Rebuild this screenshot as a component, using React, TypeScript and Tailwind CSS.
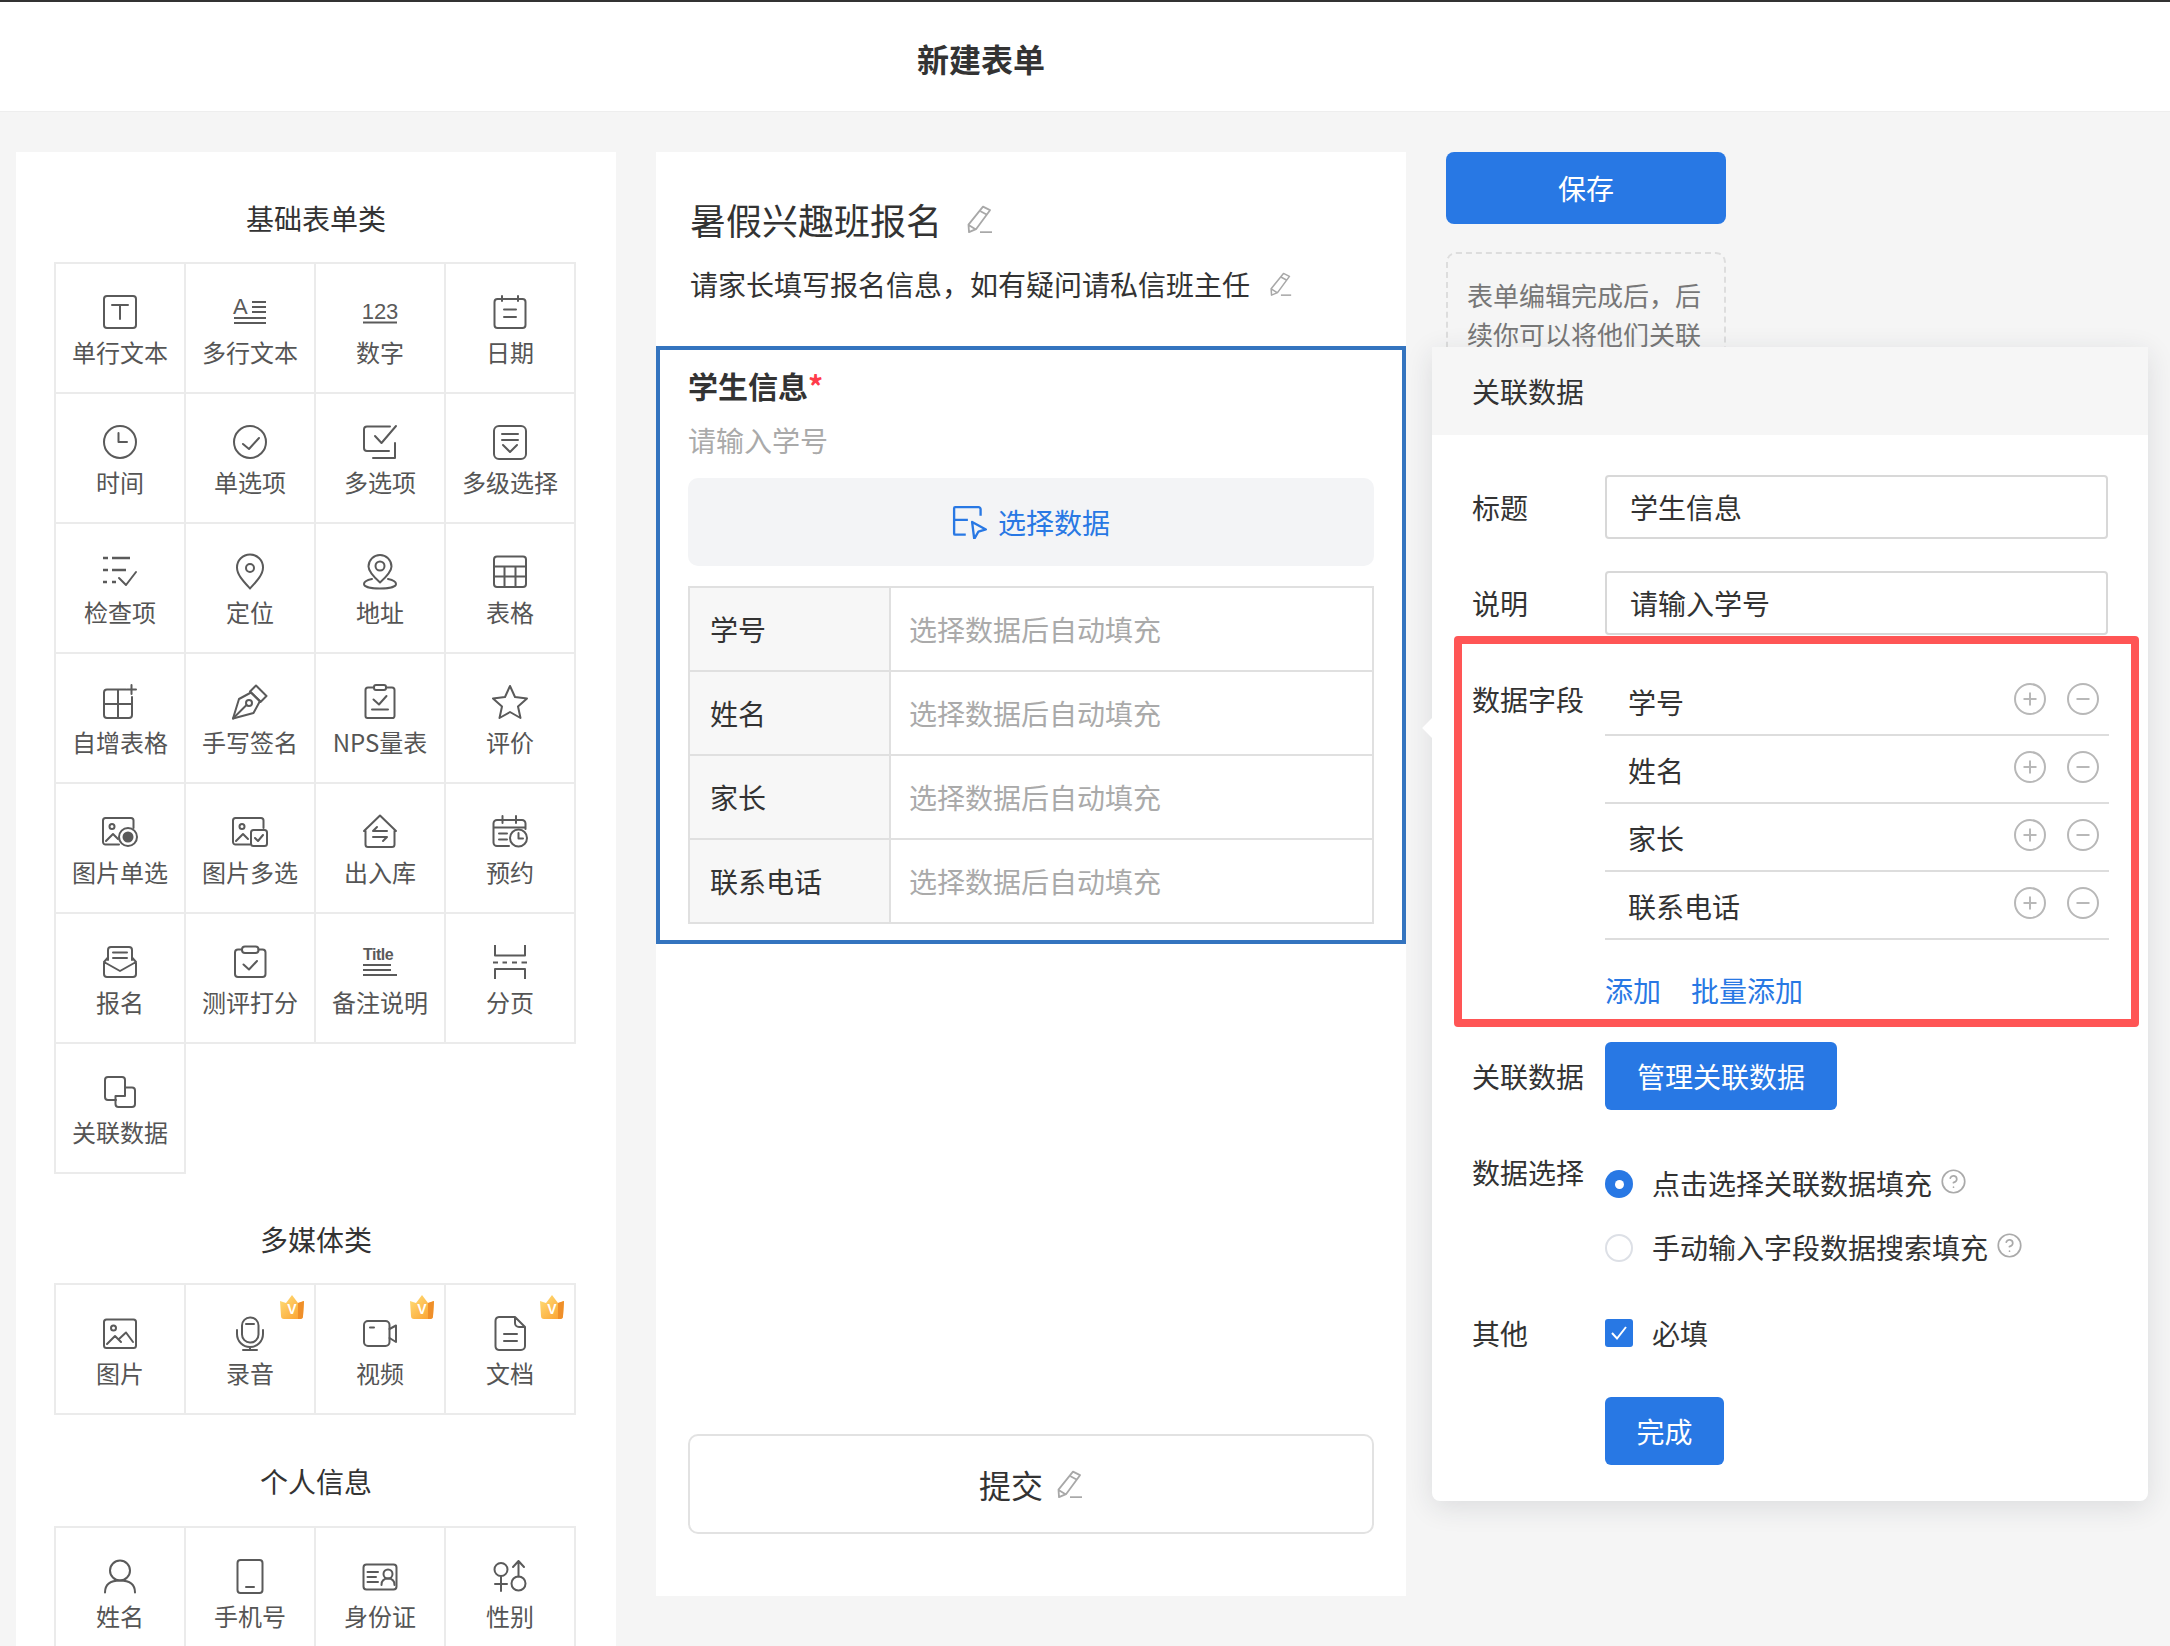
import type { ReactNode } from "react";
import { CircleHelp } from "lucide-react";

const S = ({ children }: { children: ReactNode }) => (
    <svg width="36" height="36" viewBox="0 0 36 36" fill="none" stroke="#5a5a5a" strokeWidth="2" strokeLinecap="round" strokeLinejoin="round" overflow="visible">
        {children}
    </svg>
);

const icons: Record<string, ReactNode> = {
    text: <S><rect x="2" y="2" width="32" height="32" rx="3" /><path d="M10 11H26M18 11V25" /></S>,
    lines: (
        <S>
            <text x="1" y="20" fontSize="22" fill="#5a5a5a" stroke="none" fontFamily="Liberation Sans">A</text>
            <path d="M20 8H34M20 13H34M20 18H34M2 24H34M2 29H34" strokeLinecap="butt" />
        </S>
    ),
    num: (
        <S>
            <text x="18" y="25" fontSize="22" textAnchor="middle" fill="#5a5a5a" stroke="none" fontFamily="Liberation Sans">123</text>
            <path d="M1 28.5H35" strokeLinecap="butt" />
        </S>
    ),
    date: <S><rect x="2.5" y="5" width="31" height="29" rx="3" /><path d="M10 2V7M26 2V7M12 15.5H24M12 23H24" /></S>,
    clock: <S><circle cx="18" cy="18" r="16" /><path d="M16.5 9V18H25" /></S>,
    radio: <S><circle cx="18" cy="18" r="16" /><path d="M11 20L17 25L27 14" /></S>,
    multi: <S><path d="M28 2.5H5a3 3 0 0 0-3 3V24a3 3 0 0 0 3 3H27M13 12L19.5 19L34 2M33 19V34H11" /></S>,
    cascade: <S><rect x="2" y="2" width="32" height="33" rx="5" /><path d="M10 10H26M10 16H26M11 21L18 28L25 21" /></S>,
    check: (
        <S>
            <path d="M1 4H6M10 4H28M1 16H6M10 16H24M1 28H5M10 28H14" strokeWidth="2.6" strokeLinecap="butt" />
            <path d="M17 24L24 31L34 18" />
        </S>
    ),
    pin: <S><path d="M18 34.5C12 28 5 21 5 13.5A13 13 0 0 1 31 13.5C31 21 24 28 18 34.5Z" /><circle cx="18" cy="14" r="4" /></S>,
    addr: (
        <S>
            <path d="M18 28.5C13 24 6.5 18 6.5 12.5A11.5 11.5 0 0 1 29.5 12.5C29.5 18 23 24 18 28.5Z" />
            <circle cx="18" cy="12" r="4.5" />
            <path d="M10 25C5 26 2 27.5 2 30C2 33 10 34.5 18 34.5S34 33 34 30C34 27.5 31 26 26 25" />
        </S>
    ),
    table: <S><rect x="2" y="2.5" width="32" height="30.5" rx="3" /><path d="M2 12.5H34M2 22.5H34M12.5 12.5V33M23.5 12.5V33" /></S>,
    addTable: (
        <S>
            <path d="M24 5.5H5a3 3 0 0 0-3 3V31a3 3 0 0 0 3 3H27a3 3 0 0 0 3-3V13M16 5.5V34M2 20H30M29.5 1V10M25 5.5H34" />
        </S>
    ),
    sign: (
        <S>
            <path d="M1 34.5L7 15L19 8.5L28 17L21.5 29Z" />
            <path d="M18 7.5L24 1.5L34.5 12L28.5 18Z" />
            <circle cx="17" cy="19" r="3" />
            <path d="M1 34.5L14.5 21" />
        </S>
    ),
    nps: (
        <S>
            <path d="M12 3.5H6a2.5 2.5 0 0 0-2.5 2.5V32a2 2 0 0 0 2 2H30a2 2 0 0 0 2.500-2V6A2.500 2.500 0 0 0 30 3.500H24" />
            <rect x="12" y="1" width="12" height="5" rx="2" />
            <path d="M11.500 15.500L17 20.500L24.500 12M10 25.500H26" />
        </S>
    ),
    star: <S><path d="M18 2L23 13L35 14.500L26 22.500L28.500 34L18 28L7.500 34L10 22.500L1 14.500L13 13Z" /></S>,
    imgRadio: (
        <S>
            <path d="M31.500 14V6.500A2.500 2.500 0 0 0 29 4H3.500A2.500 2.500 0 0 0 1 6.500V28A2.500 2.500 0 0 0 3.500 30.500H17" />
            <circle cx="10" cy="12.500" r="2.500" />
            <path d="M4 27L11 20L16 25" />
            <circle cx="26" cy="23" r="9" />
            <circle cx="26" cy="23" r="5.500" fill="#5a5a5a" stroke="none" />
        </S>
    ),
    imgMulti: (
        <S>
            <path d="M31.500 14V6.500A2.500 2.500 0 0 0 29 4H3.500A2.500 2.500 0 0 0 1 6.500V28A2.500 2.500 0 0 0 3.500 30.500H18" />
            <circle cx="10" cy="12.500" r="2.500" />
            <path d="M4 27L11 20L16 25" />
            <rect x="19" y="16" width="16" height="16" rx="2.500" />
            <path d="M23 24L26 27L31 21" />
        </S>
    ),
    stock: (
        <S>
            <path d="M18 1.500L2 17H3.500V30.500A2.500 2.500 0 0 0 6 33H30A2.500 2.500 0 0 0 32.500 30.500V17H34Z" />
            <path d="M25 17H11L15 13M11 23H25L21 27" />
        </S>
    ),
    book: (
        <S>
            <path d="M17 32H5A3.500 3.500 0 0 1 1.500 28.500V9.500A3.500 3.500 0 0 1 5 6H30A3.500 3.500 0 0 1 33.500 9.500V15M1.500 13.500H33.500M10.500 2V9M24 2V9M7 19.500H15M7 25.500H15" />
            <circle cx="26.500" cy="24" r="8.500" />
            <path d="M26.500 19V24.500H31" />
        </S>
    ),
    signup: (
        <S>
            <path d="M6 16V6A3 3 0 0 1 9 3H27A3 3 0 0 1 30 6V16M11 8.500H25M11 14H25" />
            <path d="M6 13.500L2 18V30A3 3 0 0 0 5 33H31A3 3 0 0 0 34 30V18L30 13.500M2 18L18 27L34 18" />
        </S>
    ),
    score: (
        <S>
            <path d="M10 5.500H6A3 3 0 0 0 3 8.500V30A3 3 0 0 0 6 33H30.500A3 3 0 0 0 33.500 30V8.500A3 3 0 0 0 30.500 5.500H26.500" />
            <rect x="10" y="2.500" width="16.500" height="6.500" rx="3" />
            <path d="M11.500 20.500L17 25.500L25 17" />
        </S>
    ),
    note: (
        <S>
            <text x="1" y="16" fontSize="16" fill="#5a5a5a" stroke="none" fontFamily="Liberation Sans" fontWeight="700" letterSpacing="-0.5">Title</text>
            <path d="M1 21H29M1 26H29M1 31H35" strokeLinecap="butt" />
        </S>
    ),
    page: <S><path d="M3 1V11.500H33V1M1 18.500H6M10.500 18.500H15M20 18.500H25M29.500 18.500H35M3 35V25H33V35" strokeLinecap="butt" /></S>,
    link: (
        <S>
            <path d="M14 26H6A3 3 0 0 1 3 23V6A3 3 0 0 1 6 3H20A3 3 0 0 1 23 6V13" />
            <path d="M23 22V13.500H30A3 3 0 0 1 33 16.500V30A3 3 0 0 1 30 33H16.500A3 3 0 0 1 13.500 30V22H23Z" />
        </S>
    ),
    image: (
        <S>
            <rect x="2" y="4.500" width="32" height="28.500" rx="2.500" />
            <circle cx="11.500" cy="13" r="2.500" />
            <path d="M5 29L13 21L19 27M17 24L24 17.500L31 27" />
        </S>
    ),
    mic: (
        <S>
            <rect x="10" y="2.500" width="16.500" height="25" rx="8" />
            <path d="M14 9H22M5 15V19A13 13 0 0 0 31 19V15M18 32V35M11 35H25" />
        </S>
    ),
    video: (
        <S>
            <rect x="2" y="6" width="25.500" height="25" rx="4" />
            <path d="M27.500 14L34 10.500V27L27.500 23M8 12.500H12" />
        </S>
    ),
    doc: (
        <S>
            <path d="M23 2H7A4 4 0 0 0 3.500 6V31A4 4 0 0 0 7 35H29A4 4 0 0 0 33 31V12ZM23 2V8A4 4 0 0 0 27 12H33M12 19H25M12 26H25" />
        </S>
    ),
    person: <S><circle cx="18" cy="12.500" r="10" /><path d="M3 34.500C3 26 9 22.500 18 22.500S33 26 33 34.500" /></S>,
    phone: <S><rect x="5.500" y="2" width="25" height="33" rx="3" /><path d="M14 29H22" /></S>,
    idcard: (
        <S>
            <rect x="1.500" y="6.500" width="33" height="25" rx="3" />
            <path d="M5.500 14H16M5.500 19H14M5.500 24H16" />
            <circle cx="26" cy="16" r="4.500" />
            <path d="M19.500 27C19.500 22.500 22 20.500 26 20.500S32.500 22.500 32.500 27" />
        </S>
    ),
    gender: (
        <S>
            <circle cx="9" cy="11.500" r="6.500" />
            <path d="M9 18V33M3 26H15" />
            <circle cx="26.500" cy="25.500" r="7" />
            <path d="M26.500 18.500V3M21 9L26.500 3L32 9" />
        </S>
    ),
};

const basic = [
    ["text", "单行文本"], ["lines", "多行文本"], ["num", "数字"], ["date", "日期"],
    ["clock", "时间"], ["radio", "单选项"], ["multi", "多选项"], ["cascade", "多级选择"],
    ["check", "检查项"], ["pin", "定位"], ["addr", "地址"], ["table", "表格"],
    ["addTable", "自增表格"], ["sign", "手写签名"], ["nps", "NPS量表"], ["star", "评价"],
    ["imgRadio", "图片单选"], ["imgMulti", "图片多选"], ["stock", "出入库"], ["book", "预约"],
    ["signup", "报名"], ["score", "测评打分"], ["note", "备注说明"], ["page", "分页"],
    ["link", "关联数据"],
];
const media = [["image", "图片"], ["mic", "录音", "v"], ["video", "视频", "v"], ["doc", "文档", "v"]];
const personal = [["person", "姓名"], ["phone", "手机号"], ["idcard", "身份证"], ["gender", "性别"]];

const fields = ["学号", "姓名", "家长", "联系电话"];

function Crown() {
    return (
        <svg className="absolute top-[10px] right-[10px]" width="24" height="24" viewBox="0 0 24 24">
            <defs>
                <linearGradient id="crown" x1="0" y1="0" x2="1" y2="1">
                    <stop offset="0" stopColor="#ffe07a" />
                    <stop offset="1" stopColor="#fb9d2c" />
                </linearGradient>
            </defs>
            <path d="M0 6L6 8L12 0L18 8L24 6L23 21Q23 24 20 24H4Q1 24 1 21Z" fill="url(#crown)" />
            <path d="M18 8L24 6L23 21Q23 24 20 24L18 24Z" fill="#ef8f2a" />
            <text x="12" y="19" fontSize="14" fontWeight="700" textAnchor="middle" fill="#fff" fontFamily="Liberation Sans">V</text>
        </svg>
    );
}

function Palette({ items }: { items: string[][] }) {
    return (
        <div className="w-[522px] mr-[2px] pt-[2px] pl-[2px] grid grid-cols-[repeat(4,130px)] auto-rows-[130px]">
            {items.map(([icon, label, vip]) => (
                <div key={label} className="relative -ml-[2px] -mt-[2px] w-[132px] h-[132px] border-2 border-[#ebebeb] flex flex-col items-center pt-[30px]">
                    {icons[icon]}
                    <div className="mt-[5px] text-[24px] leading-[34px] text-[#555]">{label}</div>
                    {vip && <Crown />}
                </div>
            ))}
        </div>
    );
}

function Pencil({ w = 27 }: { w?: number }) {
    return (
        <svg width={w} height={w * 1.05} viewBox="0 0 27 28" fill="none" stroke="#a8a8a8" strokeWidth="1.8" strokeLinejoin="round">
            <path d="M17 1.500L24 5L10 24L3 27L2.500 19.500ZM14.500 6L21 9.500M3 20L9.500 24" />
            <path d="M14 27H26" />
        </svg>
    );
}

function RoundIcon({ minus }: { minus?: boolean }) {
    return (
        <svg width="32" height="32" viewBox="0 0 32 32" fill="none" stroke="#b8b8b8" strokeWidth="2">
            <circle cx="16" cy="16" r="15" />
            <path d={minus ? "M9.500 16H22.500" : "M9.500 16H22.500M16 9.500V22.500"} />
        </svg>
    );
}

export default function App() {
    return (
        <div className="relative w-[2170px] h-[1646px] overflow-hidden bg-[#f5f5f5] text-[#333] font-['Noto_Sans_CJK_SC','Noto_Sans',sans-serif]">
            <div className="h-[2px] bg-[#333]" />
            <div className="h-[110px] bg-white border-b border-[#eeeeee] flex items-center justify-center pr-[208px] pt-[3px] text-[32px] font-bold">新建表单</div>

            <div className="flex items-start pt-[40px] pl-[16px] gap-[40px]">
                <div className="w-[600px] h-[1500px] bg-white flex flex-col items-center">
                    <div className="mt-[46px] mb-[24px] text-[28px] leading-[40px]">基础表单类</div>
                    <Palette items={basic} />
                    <div className="mt-[45px] mb-[24px] text-[28px] leading-[40px]">多媒体类</div>
                    <Palette items={media} />
                    <div className="mt-[46px] mb-[25px] text-[28px] leading-[40px]">个人信息</div>
                    <Palette items={personal} />
                </div>

                <div className="w-[750px] h-[1444px] bg-white">
                    <div className="pl-[34px] pt-[42px]">
                        <div className="flex items-center gap-[24px] text-[36px] leading-[50px]">暑假兴趣班报名 <Pencil /></div>
                        <div className="mt-[20px] flex items-center gap-[19px] text-[28px] leading-[40px]">请家长填写报名信息，如有疑问请私信班主任 <Pencil w={23} /></div>
                    </div>

                    <div className="mt-[42px] h-[598px] border-4 border-[#3474bf] px-[28px] pt-[13px]">
                        <div className="text-[30px] leading-[44px] font-bold">学生信息<span className="text-[#ff3b4a]">*</span></div>
                        <div className="mt-[13px] text-[28px] leading-[40px] text-[#aaa]">请输入学号</div>
                        <div className="mt-[18px] h-[88px] rounded-[10px] bg-[#f3f4f6] flex items-center justify-center gap-[10px] text-[28px] text-[#2878e4]">
                            <svg width="36" height="34" viewBox="0 0 34 32" fill="none" stroke="#2878e4" strokeWidth="2.200" strokeLinejoin="round">
                                <path d="M27 10V4A2 2 0 0 0 25 2H3A1 1 0 0 0 2 3V27A1 1 0 0 0 3 28H13M2 14H15" />
                                <path d="M19 16L32 23L25 25L21 32Z" />
                            </svg>
                            选择数据
                        </div>
                        <div className="mt-[20px] border-t-2 border-x-2 border-[#e0e0e0] text-[28px]">
                            {fields.map(f => (
                                <div key={f} className="flex h-[84px] border-b-2 border-[#e0e0e0]">
                                    <div className="w-[201px] pl-[20px] flex items-center bg-[#f7f7f7] border-r-2 border-[#e0e0e0]">{f}</div>
                                    <div className="pl-[18px] flex items-center text-[#aaa]">选择数据后自动填充</div>
                                </div>
                            ))}
                        </div>
                    </div>

                    <div className="mt-[490px] mx-[32px] h-[100px] border-2 border-[#e2e2e2] rounded-[10px] flex items-center justify-center gap-[13px] text-[32px]">
                        提交 <Pencil />
                    </div>
                </div>

                <div className="w-[280px] flex flex-col">
                    <div className="h-[72px] rounded-[8px] bg-[#2878e4] text-white text-[28px] flex items-center justify-center">保存</div>
                    <div className="mt-[28px] h-[220px] border-2 border-dashed border-[#dddddd] rounded-[10px] px-[19px] pt-[21px] text-[26px] leading-[39px] text-[#777]">
                        表单编辑完成后，后续你可以将他们关联
                    </div>
                </div>
            </div>

            <div className="absolute left-[1432px] top-[347px] w-[716px] bg-white rounded-b-[8px] shadow-[0_6px_28px_rgba(30,40,60,0.12)] text-[28px]">
                <div className="absolute -left-[7px] top-[374px] w-[14px] h-[14px] rotate-45 bg-white" />
                <div className="h-[88px] bg-[#f6f6f6] pl-[40px] flex items-center">关联数据</div>
                <div className="pl-[40px] pr-[40px] pb-[36px]">
                    <div className="mt-[40px] flex items-center">
                        <div className="w-[133px]">标题</div>
                        <div className="flex-1 h-[64px] border-2 border-[#d8d8d8] rounded-[4px] pl-[23px] flex items-center">学生信息</div>
                    </div>
                    <div className="mt-[32px] flex items-center">
                        <div className="w-[133px]">说明</div>
                        <div className="flex-1 h-[64px] border-2 border-[#d8d8d8] rounded-[4px] pl-[23px] flex items-center">请输入学号</div>
                    </div>

                    <div className="mt-[33px] flex items-start">
                        <div className="w-[133px] mt-[11px] leading-[40px]">数据字段</div>
                        <div className="flex-1 -mr-[1px]">
                            {fields.map(f => (
                                <div key={f} className="h-[68px] border-b-2 border-[#dddddd] pl-[23px] pr-[10px] flex items-center">
                                    <div className="flex-1 mt-[1px]">{f}</div>
                                    <div className="flex gap-[21px] -mt-[4px]">
                                        <RoundIcon />
                                        <RoundIcon minus />
                                    </div>
                                </div>
                            ))}
                            <div className="mt-[30px] flex gap-[30px] leading-[40px] text-[#2878e4]">
                                <span>添加</span>
                                <span>批量添加</span>
                            </div>
                        </div>
                    </div>

                    <div className="mt-[32px] flex items-center">
                        <div className="w-[133px]">关联数据</div>
                        <div className="h-[68px] px-[32px] rounded-[6px] bg-[#2878e4] text-white flex items-center">管理关联数据</div>
                    </div>

                    <div className="mt-[42px] flex items-start">
                        <div className="w-[133px] leading-[40px]">数据选择</div>
                        <div className="pt-[11px] flex flex-col gap-[24px] leading-[40px]">
                            <div className="flex items-center">
                                <div className="w-[28px] h-[28px] rounded-full bg-[#2878e4] flex items-center justify-center mt-[2px]">
                                    <div className="w-[9px] h-[9px] rounded-full bg-white" />
                                </div>
                                <span className="ml-[19px]">点击选择关联数据填充</span>
                                <CircleHelp className="ml-[8px] -mt-[4px]" size={27} strokeWidth={1.500} color="#aaaaaa" />
                            </div>
                            <div className="flex items-center">
                                <div className="w-[28px] h-[28px] rounded-full border-2 border-[#dde0e6] mt-[2px]" />
                                <span className="ml-[19px]">手动输入字段数据搜索填充</span>
                                <CircleHelp className="ml-[8px] -mt-[4px]" size={27} strokeWidth={1.500} color="#aaaaaa" />
                            </div>
                        </div>
                    </div>

                    <div className="mt-[46px] flex items-center leading-[40px]">
                        <div className="w-[133px]">其他</div>
                        <div className="w-[28px] h-[28px] rounded-[3px] bg-[#2878e4] flex items-center justify-center">
                            <svg width="18" height="18" viewBox="0 0 18 18" fill="none" stroke="#fff" strokeWidth="2"><path d="M2 9L7 14.500L16 3" /></svg>
                        </div>
                        <span className="ml-[19px]">必填</span>
                    </div>

                    <div className="mt-[44px] ml-[133px] w-[119px] h-[68px] rounded-[6px] bg-[#2878e4] text-white flex items-center justify-center">完成</div>
                </div>
                <div className="absolute left-[22px] top-[289px] w-[685px] h-[391px] border-8 border-[#ff5555] rounded-[4px] pointer-events-none" />
            </div>
        </div>
    );
}
